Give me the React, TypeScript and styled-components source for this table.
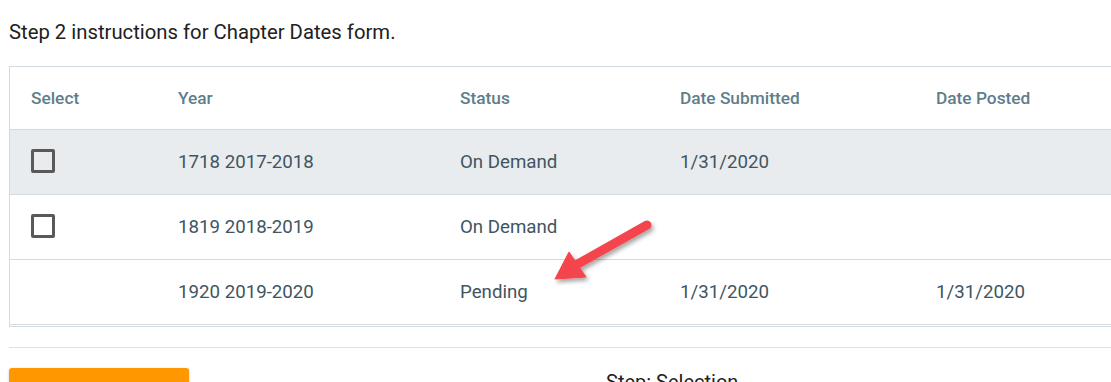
import React from "react";
import styled, { createGlobalStyle } from "styled-components";

const GlobalStyle = createGlobalStyle`
  html, body {
    margin: 0;
    padding: 0;
    background: #ffffff;
    overflow: hidden;
  }
  body {
    font-family: Roboto, "Liberation Sans", Arial, sans-serif;
  }
`;

const Page = styled.div`
  position: relative;
  padding: 20px 0 0 9px;
  width: 1140px;
`;

const Intro = styled.p`
  margin: 0 0 22px;
  font-size: 20.3px;
  line-height: 24px;
  color: #212121;
`;

const Table = styled.div`
  width: 1130px;
  border: 1px solid #d3dbe0;
  padding-bottom: 1px;
`;

const COLS = "147px 282px 220px 256px 1fr";

const HeadRow = styled.div`
  display: grid;
  grid-template-columns: ${COLS};
  align-items: center;
  height: 62px;
  border-bottom: 1px solid #d3dbe0;
`;

const HeadCell = styled.div`
  padding-left: 21px;
  font-size: 17.3px;
  font-weight: 500;
  color: #607d8b;
`;

const Row = styled.div<{ $shaded?: boolean }>`
  display: grid;
  grid-template-columns: ${COLS};
  align-items: center;
  height: 64px;
  border-bottom: 1px solid #d3dbe0;
  background: ${(p) => (p.$shaded ? "#e9ecef" : "#ffffff")};
`;

const Cell = styled.div`
  padding-left: 21px;
  font-size: 18.7px;
  line-height: 22px;
  color: #415560;
  display: flex;
  align-items: center;
  margin-top: -1px;
`;

const Checkbox = styled.span`
  display: inline-block;
  box-sizing: border-box;
  width: 24px;
  height: 24px;
  margin-top: -1px;
  border: 3px solid #595959;
  border-radius: 2px;
  background: transparent;
`;

const Divider = styled.hr`
  width: 1130px;
  margin: 20px 0 20px;
  border: 0;
  border-top: 1px solid #dde1e4;
`;

const Footer = styled.div`
  display: flex;
  align-items: flex-start;
`;

const PrimaryButton = styled.button`
  width: 180px;
  height: 40px;
  border: 0;
  border-radius: 3px;
  background: #ff9800;
  box-shadow: 0 1px 3px rgba(0, 0, 0, 0.2);
`;

const StepLabel = styled.span`
  margin-left: 417px;
  padding-top: 2px;
  font-size: 20px;
  line-height: 24px;
  color: #212121;
`;

const Arrow = styled.svg`
  position: absolute;
  left: 540px;
  top: 215px;
  overflow: visible;
`;

type Entry = {
  year: string;
  status: string;
  submitted: string;
  posted: string;
  selectable: boolean;
};

const entries: Entry[] = [
  { year: "1718 2017-2018", status: "On Demand", submitted: "1/31/2020", posted: "", selectable: true },
  { year: "1819 2018-2019", status: "On Demand", submitted: "", posted: "", selectable: true },
  { year: "1920 2019-2020", status: "Pending", submitted: "1/31/2020", posted: "1/31/2020", selectable: false },
];

export default function App() {
  return (
    <Page>
      <GlobalStyle />
      <Intro>Step 2 instructions for Chapter Dates form.</Intro>

      <Table>
        <HeadRow>
          <HeadCell>Select</HeadCell>
          <HeadCell>Year</HeadCell>
          <HeadCell>Status</HeadCell>
          <HeadCell>Date Submitted</HeadCell>
          <HeadCell>Date Posted</HeadCell>
        </HeadRow>
        {entries.map((e, i) => (
          <Row key={e.year} $shaded={i === 0}>
            <Cell>{e.selectable && <Checkbox />}</Cell>
            <Cell>{e.year}</Cell>
            <Cell>{e.status}</Cell>
            <Cell>{e.submitted}</Cell>
            <Cell>{e.posted}</Cell>
          </Row>
        ))}
      </Table>

      <Divider />

      <Footer>
        <PrimaryButton />
        <StepLabel>Step: Selection</StepLabel>
      </Footer>

      {/* annotation arrow pointing at the Pending row */}
      <Arrow width="120" height="75" viewBox="0 0 120 75">
        <defs>
          <filter id="arrowShadow" x="-20%" y="-20%" width="150%" height="150%">
            <feDropShadow dx="2" dy="3" stdDeviation="2" floodColor="#000" floodOpacity="0.35" />
          </filter>
        </defs>
        <g filter="url(#arrowShadow)" fill="#f3454b" stroke="#f3454b">
          <line x1="107" y1="10" x2="36" y2="50" strokeWidth="9" strokeLinecap="round" />
          <polygon points="15,64 29,37 46,62" strokeWidth="1" strokeLinejoin="round" />
        </g>
      </Arrow>
    </Page>
  );
}
